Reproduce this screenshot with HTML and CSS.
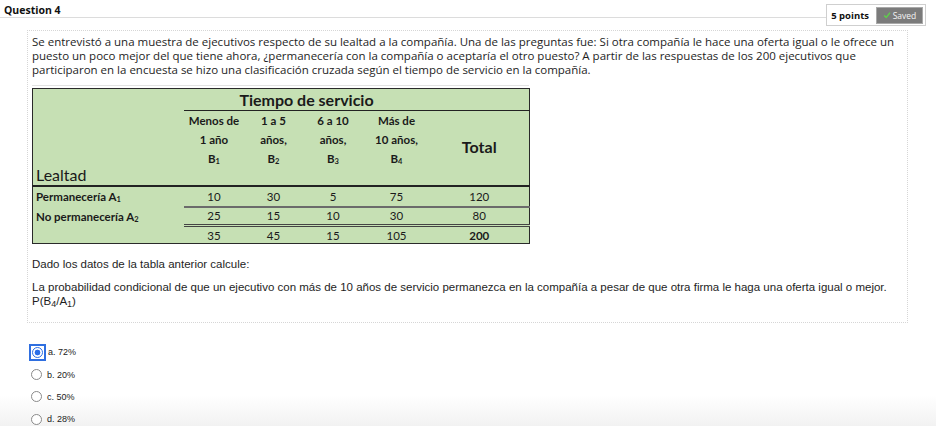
FILE: index.html
```html
<!DOCTYPE html>
<html lang="es">
<head>
<meta charset="utf-8">
<title>Question 4</title>
<link rel="stylesheet" href="styles.css">
</head>
<body>
<div class="qhead">
  <div class="qtitle">Question 4</div>
  <div class="points">
    <span class="pts">5 points</span>
    <span class="saved"><svg class="check" viewBox="0 0 10 10" width="8" height="8"><path d="M1.5 5.5 L4 8 L8.8 2" fill="none" stroke="#5fd04a" stroke-width="1.8"/></svg>Saved</span>
  </div>
</div>

<div class="qbox">
  <p class="intro">Se entrevistó a una muestra de ejecutivos respecto de su lealtad a la compañía. Una de las preguntas fue: Si otra compañía le hace una oferta igual o le ofrece un puesto un poco mejor del que tiene ahora, ¿permanecería con la compañía o aceptaría el otro puesto? A partir de las respuestas de los 200 ejecutivos que participaron en la encuesta se hizo una clasificación cruzada según el tiempo de servicio en la compañía.</p>

  <div class="tablewrap">
  <table class="ct">
    <colgroup>
      <col class="c0"><col class="c1"><col class="c2"><col class="c3"><col class="c4"><col class="c5">
    </colgroup>
    <tr class="r-title">
      <td class="lab" rowspan="2">Lealtad</td>
      <td class="tiempo" colspan="4">Tiempo de servicio</td>
      <td class="tline"></td>
    </tr>
    <tr class="r-head">
      <th>Menos de<br>1 año<br>B<sub>1</sub></th>
      <th>1 a 5<br>años,<br>B<sub>2</sub></th>
      <th>6 a 10<br>años,<br>B<sub>3</sub></th>
      <th>Más de<br>10 años,<br>B<sub>4</sub></th>
      <th class="total">Total</th>
    </tr>
    <tr class="r1">
      <td class="rl">Permanecería A<sub>1</sub></td>
      <td>10</td><td>30</td><td>5</td><td>75</td><td>120</td>
    </tr>
    <tr class="r2">
      <td class="rl">No permanecería A<sub>2</sub></td>
      <td>25</td><td>15</td><td>10</td><td>30</td><td>80</td>
    </tr>
    <tr class="r3">
      <td class="rl"></td>
      <td>35</td><td>45</td><td>15</td><td>105</td><td class="b">200</td>
    </tr>
  </table>
  </div>

  <p class="arial first">Dado los datos de la tabla anterior calcule:</p>
  <p class="arial">La probabilidad condicional de que un ejecutivo con más de 10 años de servicio permanezca en la compañía a pesar de que otra firma le haga una oferta igual o mejor.<br>P(B<sub>4</sub>/A<sub>1</sub>)</p>
</div>

<ul class="opts">
  <li class="opt sel"><span class="focus"><span class="radio on"></span></span><span class="lbl">a. 72%</span></li>
  <li class="opt"><span class="radio"></span><span class="lbl">b. 20%</span></li>
  <li class="opt"><span class="radio"></span><span class="lbl">c. 50%</span></li>
  <li class="opt"><span class="radio"></span><span class="lbl">d. 28%</span></li>
</ul>
</body>
</html>
```

FILE: styles.css
```css
html, body {
  margin: 0;
  padding: 0;
}
body {
  width: 936px;
  height: 426px;
  overflow: hidden;
  background: linear-gradient(to bottom, #ffffff 0, #ffffff 395px, #f2f2f2 426px);
  font-family: "Open Sans", "DejaVu Sans", sans-serif;
  color: #222;
}

/* header */
.qhead {
  display: flex;
  align-items: flex-start;
  padding: 4px 10px 0 0;
  height: 26px;
}
.qtitle {
  flex: 1;
  height: 13px;
  line-height: 13px;
  padding-left: 4px;
  font-size: 10.5px;
  font-weight: 700;
  color: #111;
  border-bottom: 1px solid #dcdcdc;
}
.points {
  display: flex;
  align-items: center;
  gap: 7px;
  height: 20px;
  padding: 0 2px 0 4px;
  border: 1px solid #cfcfcf;
  background: #fff;
}
.pts {
  font-size: 9.5px;
  font-weight: 700;
  color: #111;
}
.saved {
  display: flex;
  align-items: center;
  gap: 2px;
  width: 45px;
  height: 15px;
  justify-content: center;
  background: #7b7b7b;
  border: 1px solid #a9a9a9;
  color: #f4f4f4;
  font-size: 8.5px;
}
.check {
  display: block;
}

/* question box */
.qbox {
  margin-left: 27px;
  width: 871px;
  padding: 4px 4px 14px 4px;
  border: 1px dotted #d6d6d6;
}
.intro {
  margin: 0;
  font-size: 11.5px;
  line-height: 14px;
  color: #1e1e1e;
}
.tablewrap {
  margin-top: 8px;
  width: 497px;
  border-top: 1px solid #e2e2e2;
  padding-top: 2px;
}
.ct {
  width: 497px;
  border-collapse: collapse;
  background: #c6e0b4;
  border: 1px solid #2a2a2a;
  font-family: Lato, "Open Sans", sans-serif;
  color: #1a1a1a;
  table-layout: fixed;
}
.c0 { width: 151px; }
.c1 { width: 61px; }
.c2 { width: 58px; }
.c3 { width: 61px; }
.c4 { width: 66px; }
.c5 { width: 100px; }

.ct td, .ct th {
  padding: 0;
  text-align: center;
  font-size: 11.5px;
}
.ct sub {
  font-size: 7.5px;
  vertical-align: -1px;
  line-height: 0;
}
.r-title { height: 22px; }
.tiempo {
  font-size: 16px !important;
  font-weight: 700;
  border-bottom: 1px solid #222;
  line-height: 20px;
}
.tline {
  border-bottom: 1px solid #222;
}
.lab {
  text-align: left !important;
  vertical-align: bottom;
  padding: 0 0 1px 3px !important;
  font-size: 16px !important;
  border-bottom: 2px solid #222;
  line-height: 18px;
}
.r-head { height: 75px; }
.r-head th {
  font-weight: 700;
  font-size: 11.5px;
  line-height: 19px;
  vertical-align: top;
  border-bottom: 2px solid #222;
  padding-top: 0;
}
.r-head th.total {
  vertical-align: middle;
  font-size: 16px;
  padding-bottom: 2px;
}
.r1 { height: 21px; }
.r2 { height: 19px; }
.r3 { height: 18px; }
.r1 td:not(.rl) {
  border-bottom: 2px solid #6b6b6b;
}
.r2 td:not(.rl) {
  border-bottom: 3px double #444;
}
.ct td.rl {
  text-align: left;
  padding-left: 3px;
  font-weight: 700;
  font-size: 11.5px;
}
.ct td.b {
  font-weight: 700;
}

.arial {
  font-family: "Liberation Sans", Arial, sans-serif;
  font-size: 11.5px;
  line-height: 14px;
  margin: 9px 0 0 0;
  color: #1e1e1e;
}
.arial.first {
  margin-top: 13px;
}
.arial sub {
  font-size: 9px;
  vertical-align: -2px;
  line-height: 0;
}

/* options */
.opts {
  list-style: none;
  margin: 18px 0 0 29px;
  padding: 0;
  font-family: "Liberation Sans", Arial, sans-serif;
  font-size: 9px;
  color: #222;
}
.opt {
  display: flex;
  align-items: center;
  height: 22.4px;
}
.focus {
  display: flex;
  align-items: center;
  justify-content: center;
  width: 13px;
  height: 13px;
  border: 2px solid #2f6fe0;
  margin-right: 2px;
}
.radio {
  display: block;
  width: 9px;
  height: 9px;
  border: 1px solid #8a8a8a;
  border-radius: 50%;
  background: #fff;
  margin: 0 5px 0 2px;
  box-sizing: content-box;
}
.focus .radio {
  margin: 0;
}
.radio.on {
  border-color: #2a6ee8;
  background: radial-gradient(circle, #2a6ee8 0, #2a6ee8 2.6px, #fff 3.2px);
}
.lbl {
  display: block;
}
```
